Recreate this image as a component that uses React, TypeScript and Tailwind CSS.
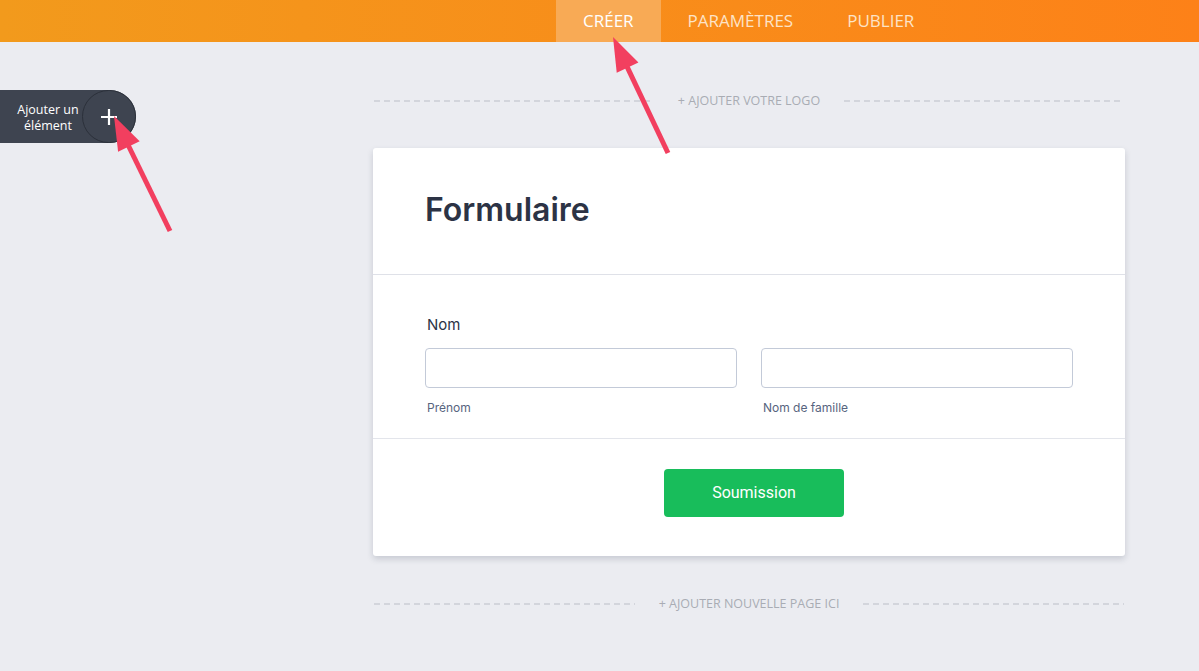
import React from 'react';

type Pt = { x: number; y: number };

// annotation arrow: straight shaft with a filled triangle head
const Arrow = ({ from, to }: { from: Pt; to: Pt }) => {
  const dx = to.x - from.x;
  const dy = to.y - from.y;
  const len = Math.hypot(dx, dy);
  const ux = dx / len;
  const uy = dy / len;
  const head = 34;
  const half = 12;
  const bx = to.x - ux * head;
  const by = to.y - uy * head;
  const px = -uy;
  const py = ux;
  const pts = `${to.x},${to.y} ${bx + px * half},${by + py * half} ${bx - px * half},${by - py * half}`;
  return (
    <g>
      <line x1={from.x} y1={from.y} x2={bx + ux * 4} y2={by + uy * 4} stroke="#f23f5f" strokeWidth={5} />
      <polygon points={pts} fill="#f23f5f" />
    </g>
  );
};

const Dashed = () => (
  <div className="flex-1 h-[2px] bg-[repeating-linear-gradient(90deg,#d3d5dc_0_6px,transparent_6px_10px)]" />
);

const AddLine = ({ label }: { label: string }) => (
  <div className="flex items-center h-6 gap-6">
    <Dashed />
    <span className="text-[12.5px] text-[#a9acb4] uppercase">{label}</span>
    <Dashed />
  </div>
);

const App = () => {
  return (
    <div className="relative min-h-screen bg-[#ebecf1] font-['Open_Sans',sans-serif] overflow-hidden">
      {/* Top bar */}
      <header className="h-[42px] bg-gradient-to-r from-[#f29a1c] to-[#fd8118] flex pl-[556px]">
        <a className="px-[27px] flex items-center bg-[#f8aa55] text-white text-[17px]">CRÉER</a>
        <a className="px-[27px] flex items-center text-[#fde3c6] text-[17px]">PARAMÈTRES</a>
        <a className="px-[27px] flex items-center text-[#fde3c6] text-[17px]">PUBLIER</a>
      </header>

      <div className="flex">
        {/* Left rail */}
        <aside className="w-[373px] pt-[48px]">
          <div className="flex items-center w-[136px] h-[53px] bg-[#3e4450] rounded-r-full">
            <div className="w-[82px] pl-[14px] text-center text-white text-[12.5px] leading-[16px] mt-[2px]">
              Ajouter un
              <br />
              élément
            </div>
            <div className="w-[54px] h-[53px] rounded-full border border-[#2b303a] flex items-center justify-center">
              <svg width="20" height="20" viewBox="0 0 20 20">
                <path d="M10 2v16M2 10h16" stroke="#fff" strokeWidth="2.2" />
              </svg>
            </div>
          </div>
        </aside>

        {/* Form column */}
        <main className="w-[752px] pt-[47px]">
          <div className="px-px">
            <AddLine label="+ Ajouter votre logo" />
          </div>

          <div className="mt-[35px] bg-white rounded-[3px] shadow-[0_3px_6px_rgba(40,48,70,0.18)] font-['Inter',sans-serif]">
            <div className="h-[127px] flex items-center px-[52px] border-b border-[#dfe1e8]">
              <h1 className="text-[32px] font-semibold text-[#2c3345] leading-none mt-[-2px]">Formulaire</h1>
            </div>

            <div className="px-[52px] pt-[40px] pb-[22px] border-b border-[#e3e5eb]">
              <label className="block text-[15px] text-[#2c3345] leading-[20px] pl-[2px]">Nom</label>
              <div className="grid grid-cols-2 gap-6 mt-[13px]">
                <div>
                  <div className="h-[40px] border border-[#c3cad8] rounded" />
                  <div className="mt-[12px] text-xs text-[#57647e] pl-[2px]">Prénom</div>
                </div>
                <div>
                  <div className="h-[40px] border border-[#c3cad8] rounded" />
                  <div className="mt-[12px] text-xs text-[#57647e] pl-[2px]">Nom de famille</div>
                </div>
              </div>
            </div>

            <div className="pt-[30px] pb-[39px] pl-[10px] flex justify-center">
              <button className="w-[180px] h-[48px] bg-[#18bd5b] rounded text-white text-base font-['Roboto',sans-serif]">
                Soumission
              </button>
            </div>
          </div>

          <div className="mt-[36px] px-px">
            <AddLine label="+ Ajouter nouvelle page ici" />
          </div>
        </main>
      </div>

      {/* annotation arrows */}
      <svg className="absolute inset-0 pointer-events-none" width="1199" height="671">
        <Arrow from={{ x: 170, y: 231 }} to={{ x: 114, y: 116 }} />
        <Arrow from={{ x: 668, y: 153 }} to={{ x: 613, y: 37 }} />
      </svg>
    </div>
  );
};

export default App;
